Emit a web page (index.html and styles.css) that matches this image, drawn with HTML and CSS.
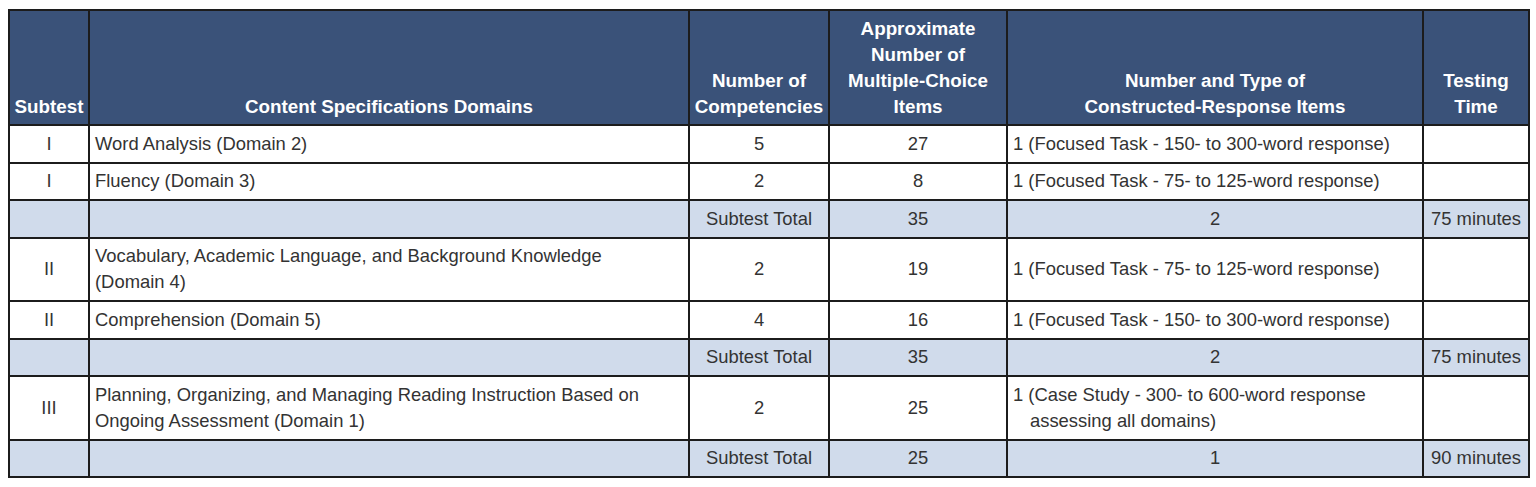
FILE: index.html
```html
<!DOCTYPE html>
<html>
<head>
<meta charset="utf-8">
<link rel="stylesheet" href="styles.css">
</head>
<body>
<table class="spec">
  <colgroup>
    <col class="c-sub"><col class="c-dom"><col class="c-comp"><col class="c-mc"><col class="c-cr"><col class="c-time">
  </colgroup>
  <thead>
    <tr>
      <th>Subtest</th>
      <th>Content Specifications Domains</th>
      <th>Number of<br>Competencies</th>
      <th>Approximate<br>Number of<br>Multiple-Choice<br>Items</th>
      <th>Number and Type of<br>Constructed-Response Items</th>
      <th>Testing<br>Time</th>
    </tr>
  </thead>
  <tbody>
    <tr>
      <td class="ctr">I</td>
      <td>Word Analysis (Domain 2)</td>
      <td class="ctr">5</td>
      <td class="ctr">27</td>
      <td>1 (Focused Task - 150- to 300-word response)</td>
      <td></td>
    </tr>
    <tr>
      <td class="ctr">I</td>
      <td>Fluency (Domain 3)</td>
      <td class="ctr">2</td>
      <td class="ctr">8</td>
      <td>1 (Focused Task - 75- to 125-word response)</td>
      <td></td>
    </tr>
    <tr class="total">
      <td></td>
      <td></td>
      <td class="ctr">Subtest Total</td>
      <td class="ctr">35</td>
      <td class="ctr">2</td>
      <td class="ctr">75 minutes</td>
    </tr>
    <tr>
      <td class="ctr">II</td>
      <td>Vocabulary, Academic Language, and Background Knowledge<br>(Domain 4)</td>
      <td class="ctr">2</td>
      <td class="ctr">19</td>
      <td>1 (Focused Task - 75- to 125-word response)</td>
      <td></td>
    </tr>
    <tr>
      <td class="ctr">II</td>
      <td>Comprehension (Domain 5)</td>
      <td class="ctr">4</td>
      <td class="ctr">16</td>
      <td>1 (Focused Task - 150- to 300-word response)</td>
      <td></td>
    </tr>
    <tr class="total">
      <td></td>
      <td></td>
      <td class="ctr">Subtest Total</td>
      <td class="ctr">35</td>
      <td class="ctr">2</td>
      <td class="ctr">75 minutes</td>
    </tr>
    <tr>
      <td class="ctr">III</td>
      <td>Planning, Organizing, and Managing Reading Instruction Based on<br>Ongoing Assessment (Domain 1)</td>
      <td class="ctr">2</td>
      <td class="ctr">25</td>
      <td class="hang">1 (Case Study - 300- to 600-word response assessing all domains)</td>
      <td></td>
    </tr>
    <tr class="total">
      <td></td>
      <td></td>
      <td class="ctr">Subtest Total</td>
      <td class="ctr">25</td>
      <td class="ctr">1</td>
      <td class="ctr">90 minutes</td>
    </tr>
  </tbody>
</table>
</body>
</html>
```

FILE: styles.css
```css
html, body {
  margin: 0;
  padding: 0;
  background: #ffffff;
}
body {
  padding: 9px 8px;
  font-family: "Liberation Sans", Arial, Helvetica, sans-serif;
}
.spec {
  width: 1520px;
  border-collapse: collapse;
  table-layout: fixed;
  font-size: 18.4px;
  line-height: 26px;
  color: #333333;
}
.c-sub { width: 80px; }
.c-dom { width: 600px; }
.c-comp { width: 140px; }
.c-mc { width: 178px; }
.c-cr { width: 416px; }
.c-time { width: 106px; }
.spec th,
.spec td {
  border: 2px solid #1c1c1c;
}
.spec th {
  background: #3a5279;
  color: #ffffff;
  font-weight: bold;
  font-size: 18.8px;
  vertical-align: bottom;
  text-align: center;
  padding: 5px 1px 4px;
}
.spec td {
  padding: 4.75px 5px;
  vertical-align: middle;
  text-align: left;
}
.spec td.ctr {
  text-align: center;
}
.spec td.hang {
  padding-left: 22px;
  text-indent: -17px;
}
.spec tr.total td {
  background: #d0dbeb;
}
```
